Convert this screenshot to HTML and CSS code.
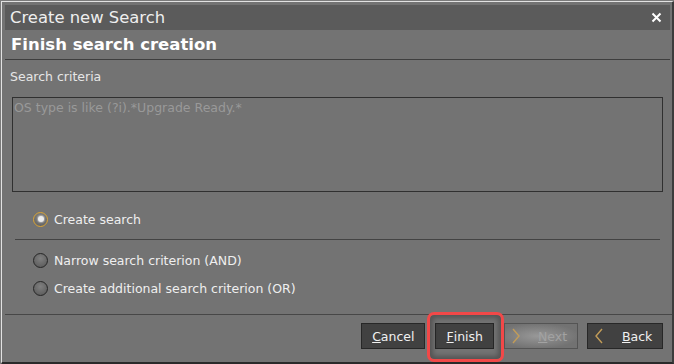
FILE: index.html
```html
<!DOCTYPE html>
<html lang="en">
<head>
    <meta charset="UTF-8">
    <title>Create new Search</title>
    <link rel="stylesheet" href="styles.css">
</head>
<body>
    <div class="dialog">
        <div class="titlebar">
            <span class="title">Create new Search</span>
            <svg class="close" width="11" height="11" viewBox="0 0 11 11"><path d="M1.5 1.5 L9.5 9.5 M9.5 1.5 L1.5 9.5" stroke="#ffffff" stroke-width="2"/></svg>
        </div>
        <div class="heading">Finish search creation</div>

        <div class="content">
            <div class="field-label">Search criteria</div>
            <textarea class="criteria" placeholder="OS type is like (?i).*Upgrade Ready.*"></textarea>

            <div class="radio-group">
                <label class="radio-item">
                    <span class="radio checked"></span>
                    <span>Create search</span>
                </label>
                <div class="separator"></div>
                <label class="radio-item">
                    <span class="radio"></span>
                    <span>Narrow search criterion (AND)</span>
                </label>
                <label class="radio-item">
                    <span class="radio"></span>
                    <span>Create additional search criterion (OR)</span>
                </label>
            </div>
        </div>

        <div class="footer">
            <button class="btn btn-text"><u>C</u>ancel</button>
            <div class="highlight-wrap">
                <button class="btn btn-text"><u>F</u>inish</button>
                <div class="highlight"></div>
            </div>
            <button class="btn btn-nav disabled">
                <svg class="chevron" width="8" height="16" viewBox="0 0 8 16"><polyline points="1,1 7,8 1,15" fill="none" stroke="#c29c58" stroke-width="1.4"/></svg>
                <span><u>N</u>ext</span>
            </button>
            <button class="btn btn-nav back">
                <svg class="chevron" width="8" height="16" viewBox="0 0 8 16"><polyline points="7,1 1,8 7,15" fill="none" stroke="#c29c58" stroke-width="1.4"/></svg>
                <span><u>B</u>ack</span>
            </button>
        </div>
    </div>
</body>
</html>
```

FILE: styles.css
```css
*, *::before, *::after {
    box-sizing: border-box;
}

html, body {
    width: 100%;
    height: 100%;
    margin: 0;
}
body {
    background: #7a7a7a;
    padding: 1px 0 0 1px;
    font-family: "DejaVu Sans", Verdana, sans-serif;
    color: #efefef;
    overflow: hidden;
}
.dialog {
    width: 673px;
    height: 363px;
    background: #737373;
    border-top: 1px solid #e2e2e2;
    border-left: 1px solid #e2e2e2;
    border-right: 2px solid #3c3c3c;
    border-bottom: 2px solid #2a2a2a;
    display: flex;
    flex-direction: column;
}
.titlebar {
    margin: 3px 2px 0 3px;
    height: 25px;
    background: #5b5b5b;
    display: flex;
    align-items: center;
    justify-content: space-between;
    padding: 0 8px 0 5px;
}
.title {
    font-size: 16.4px;
    color: #eeeeee;
}
.close {
    flex: 0 0 auto;
}
.heading {
    margin: 0 2px 0 3px;
    height: 30px;
    line-height: 29px;
    border-bottom: 1px solid #3e3e3e;
    padding-left: 6px;
    font-size: 16.5px;
    font-weight: bold;
    color: #ffffff;
}
.content {
    display: flex;
    flex-direction: column;
    padding: 0 9px 0 8px;
}
.field-label {
    margin-top: 9px;
    line-height: 16px;
    font-size: 12.5px;
    color: #e6e6e6;
}
.criteria {
    margin: 12px 0 0 2px;
    height: 95px;
    resize: none;
    background: #737373;
    border: 1px solid #303030;
    padding: 2px 1px;
    font-family: "DejaVu Sans", Verdana, sans-serif;
    font-size: 12.5px;
    color: #e0e0e0;
    outline: none;
}
.criteria::placeholder {
    color: #999999;
}
.radio-group {
    display: flex;
    flex-direction: column;
    margin-top: 15px;
}
.radio-item {
    display: flex;
    align-items: center;
    gap: 6px;
    height: 24px;
    padding-left: 23px;
    font-size: 12.5px;
    color: #efefef;
}
.radio-item + .radio-item {
    margin-top: 4px;
}
.radio {
    flex: 0 0 auto;
    width: 15px;
    height: 15px;
    border-radius: 50%;
    border: 1px solid #262626;
    background: radial-gradient(circle at 50% 35%, #808080, #565656);
    display: flex;
    align-items: center;
    justify-content: center;
}
.radio.checked {
    border: 1.5px solid #dba534;
    background: radial-gradient(circle at 50% 35%, #8a8a8a, #5a5a5a);
}
.radio.checked::after {
    content: "";
    width: 6px;
    height: 6px;
    border-radius: 50%;
    background: #ececec;
    box-shadow: 0 0 1px 1px rgba(255, 255, 255, 0.3);
}
.separator {
    margin: 8px 3px 8px 5px;
    height: 1px;
    background: #434343;
}
.footer {
    margin: 14px 0 0 3px;
    border-top: 1px solid #474747;
    padding: 8px 9px 0 0;
    display: flex;
    justify-content: flex-end;
    gap: 10px;
}
.btn {
    height: 26px;
    background: #414141;
    border: 1px solid #272727;
    color: #f0f0f0;
    font-family: "DejaVu Sans", Verdana, sans-serif;
    font-size: 12.5px;
    display: flex;
    align-items: center;
}
.btn-text {
    padding: 0 10px;
}
.btn-nav {
    padding: 0 12px 0 7px;
    gap: 18px;
}
.chevron {
    flex: 0 0 auto;
}
.btn-nav.disabled {
    width: 74px;
    background: radial-gradient(ellipse at 45% 50%, #989898, #727272 75%);
    border-color: #545454;
    color: #a2a2a2;
}
.btn-nav.back {
    width: 76px;
    gap: 19px;
    margin-left: -1px;
}
.highlight-wrap {
    position: relative;
}
.highlight {
    position: absolute;
    left: -8px;
    right: -10px;
    top: -11px;
    bottom: -13px;
    border: 3px solid #f24848;
    border-radius: 7px;
    box-shadow: inset 0 0 5px 3px rgba(0, 0, 0, 0.28);
    pointer-events: none;
}
```
